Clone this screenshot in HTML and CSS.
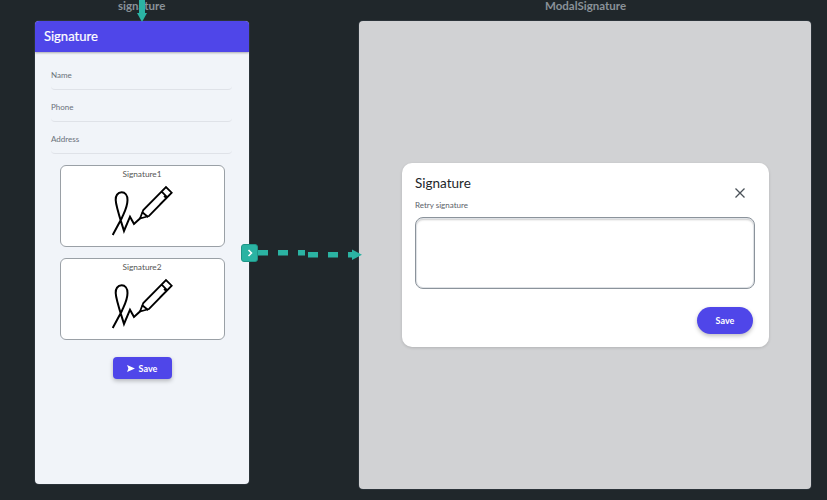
FILE: index.html
```html
<!DOCTYPE html>
<html lang="en">
<head>
  <meta charset="UTF-8">
  <meta name="viewport" content="width=device-width, initial-scale=1.0">
  <title>Signature flow</title>
  <link rel="stylesheet" href="styles.css">
</head>
<body>
  <svg width="0" height="0" class="defs">
    <symbol id="sign" viewBox="0 0 64 56">
      <path d="M2.7 52 11.7 35.3C14.5 29 17.5 24 17.5 17 17.5 12 15 9.3 11.7 9.3 7.5 9.3 5.5 13 5.7 17 6 24 11 38 14 48L20 33.7 24 41 30.5 35" fill="none" stroke="#000" stroke-width="2"/>
      <path d="M30 35.5 33.3 27 56 4 61.7 9.7 39 33ZM31.7 28.7 38.3 34.3M51.7 8.700 57.3 14.3M59.3 12 56.5 15 54 13M56.5 15 50 21.5" fill="none" stroke="#000" stroke-width="1.8"/>
    </symbol>
  </svg>

  <div class="canvas">
    <p class="frame-name name-left">signature</p>
    <p class="frame-name name-right">ModalSignature</p>

    <section class="phone">
      <header class="phone-head">Signature</header>
      <div class="phone-body">
        <div class="field">Name</div>
        <div class="field">Phone</div>
        <div class="field">Address</div>

        <div class="sign-card">
          <span>Signature1</span>
          <svg class="sign-icon"><use href="#sign"/></svg>
        </div>
        <div class="sign-card">
          <span>Signature2</span>
          <svg class="sign-icon"><use href="#sign"/></svg>
        </div>

        <button class="btn-send">
          <svg width="8" height="7" viewBox="0 0 9 8"><path d="M0 0 9 4 0 8 1.5 4Z" fill="#fff"/></svg>
          Save
        </button>
      </div>
    </section>

    <section class="modal-frame">
      <div class="dialog">
        <div class="dialog-top">
          <div>
            <h2>Signature</h2>
            <p class="hint">Retry signature</p>
          </div>
          <svg class="close" width="12" height="12" viewBox="0 0 12 12"><path d="M1.500 1.500 10.500 10.500M10.500 1.500 1.500 10.500" stroke="#4a5158" stroke-width="1.300"/></svg>
        </div>
        <div class="sign-input"></div>
        <div class="dialog-foot">
          <button class="btn-save">Save</button>
        </div>
      </div>
    </section>

    <!-- connectors lie over the frames -->
    <svg class="wires" width="827" height="500" viewBox="0 0 827 500">
      <path d="M142 0V14" stroke="#2bb3a3" stroke-width="6"/>
      <path d="M137 13H147L142 22Z" fill="#2bb3a3"/>
      <path d="M258 252.700H305" stroke="#2bb3a3" stroke-width="5.500" stroke-dasharray="10 10"/>
      <path d="M308 254.700H353" stroke="#2bb3a3" stroke-width="5.500" stroke-dasharray="10 10"/>
      <path d="M352 249.500 362 254.700 352 260Z" fill="#2bb3a3"/>
    </svg>
    <div class="handle">
      <svg width="6" height="8" viewBox="0 0 6 8"><path d="M1.500 1 4.500 4 1.500 7" fill="none" stroke="#fff" stroke-width="1.500"/></svg>
    </div>
  </div>
</body>
</html>
```

FILE: styles.css
```css
* {
  box-sizing: border-box;
  margin: 0;
  padding: 0;
  font-family: Lato, "Open Sans", sans-serif;
}
body {
  background-color: #20272b;
  overflow: hidden;
}
.defs {
  position: absolute;
}
.canvas {
  position: relative;
  width: 827px;
  height: 500px;
  overflow: hidden;
}
.frame-name {
  position: absolute;
  top: 0;
  font-size: 11.5px;
  line-height: 12px;
  font-weight: 700;
  color: #8a9299;
}
.name-left {
  left: 118px;
}
.name-right {
  left: 545px;
}

/* phone frame */
.phone {
  position: absolute;
  left: 35px;
  top: 21px;
  width: 214px;
  height: 463px;
  display: flex;
  flex-direction: column;
  background: #f1f4f9;
  border-radius: 4px;
  box-shadow: 0 0 0 1px #2b3339;
  overflow: hidden;
}
.phone-head {
  height: 31px;
  padding-left: 9px;
  line-height: 31px;
  font-size: 13px;
  -webkit-text-stroke: 0.2px #fff;
  color: #fff;
  background: #4f46e9;
  box-shadow: 0 1px 2px rgba(0,0,0,0.3);
}
.phone-body {
  display: flex;
  flex-direction: column;
  align-items: center;
  padding: 6px 17px 0 16px;
}
.field {
  width: 100%;
  height: 32px;
  padding-top: 12px;
  font-size: 8px;
  color: #6a7179;
  border-bottom: 1px solid #dfe2e8;
  border-radius: 0 0 4px 4px;
}
.sign-card {
  display: flex;
  flex-direction: column;
  align-items: center;
  width: 165px;
  height: 82px;
  margin: 11px 0 0 1px;
  padding-top: 3px;
  background: #fff;
  border: 1px solid #9aa0a6;
  border-radius: 6px;
  font-size: 8.3px;
  color: #555;
}
.sign-card:first-of-type {
  margin-top: 12px;
}
.sign-icon {
  width: 64px;
  height: 56px;
  margin: 4px 0 0 -1px;
}
.btn-send {
  display: flex;
  align-items: center;
  justify-content: center;
  gap: 4px;
  width: 59px;
  height: 22px;
  margin: 17px 0 0 1px;
  background: #4f46e9;
  color: #fff;
  border: none;
  border-radius: 4px;
  font-size: 9px;
  font-weight: 700;
  box-shadow: 0 2px 4px rgba(0,0,0,0.25);
}

/* modal frame */
.modal-frame {
  position: absolute;
  left: 359px;
  top: 21px;
  width: 452px;
  height: 468px;
  display: flex;
  background: #d1d2d4;
  border-radius: 4px;
  box-shadow: 0 0 0 1px #2b3339;
}
.dialog {
  width: 367px;
  height: 184px;
  margin: 142px 0 0 43px;
  padding: 12px 14px 0 13px;
  background: #fff;
  border-radius: 10px;
  box-shadow: 0 1px 3px rgba(0,0,0,0.15);
}
.dialog-top {
  display: flex;
  justify-content: space-between;
  height: 42px;
}
.dialog-top h2 {
  font-size: 13.500px;
  font-weight: 400;
  line-height: 17px;
  color: #22262a;
}
.hint {
  margin-top: 8px;
  font-size: 8px;
  color: #5a6168;
}
.close {
  margin: 12px 9px 0 0;
}
.sign-input {
  width: 340px;
  height: 72px;
  background: #fff;
  border: 1px solid #8b939b;
  border-radius: 8px;
  box-shadow: inset 0 0 0 1px #dfe2e6, inset 0 2px 2px rgba(0,0,0,0.2);
}
.dialog-foot {
  display: flex;
  justify-content: flex-end;
  padding: 18px 2px 0 0;
}
.btn-save {
  width: 56px;
  height: 27px;
  background: #4f46e9;
  color: #fff;
  border: none;
  border-radius: 14px;
  font-size: 9px;
  font-weight: 700;
  box-shadow: 0 2px 4px rgba(0,0,0,0.25);
}

/* connectors */
.wires {
  position: absolute;
  left: 0;
  top: 0;
}
.handle {
  position: absolute;
  left: 241px;
  top: 244px;
  width: 17px;
  height: 18px;
  display: flex;
  align-items: center;
  justify-content: center;
  background: #2bb3a3;
  border: 1px solid #1f9587;
  border-radius: 3px;
}
```
